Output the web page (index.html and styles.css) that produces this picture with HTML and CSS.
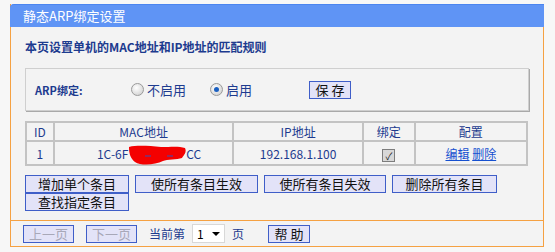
FILE: index.html
```html
<!DOCTYPE html>
<html lang="zh-CN">
<head>
    <meta charset="UTF-8">
    <title>静态ARP绑定设置</title>
    <link rel="stylesheet" href="styles.css">
</head>
<body>

<div class="panel">
    <!-- Title bar -->
    <div class="panel-title">静态ARP绑定设置</div>

    <div class="panel-body">
        <p class="intro">本页设置单机的MAC地址和IP地址的匹配规则</p>

        <!-- ARP binding switch -->
        <div class="switch-box">
            <span class="switch-label">ARP绑定:</span>
            <label class="radio-item w1"><span class="radio"></span>不启用</label>
            <label class="radio-item w2"><span class="radio checked"></span>启用</label>
            <button class="btn btn-save">保 存</button>
        </div>

        <!-- Binding list -->
        <table class="list">
            <tr class="head">
                <td class="c-id">ID</td>
                <td class="c-mac">MAC地址</td>
                <td class="c-ip">IP地址</td>
                <td class="c-bind">绑定</td>
                <td class="c-cfg">配置</td>
            </tr>
            <tr class="row">
                <td>1</td>
                <td><span class="mac">1C-6F<span class="redact"><svg width="60" height="22" viewBox="0 0 60 22"><path d="M2 3 C10 1 22 2 34 3 C44 3 52 2 58 4 C60 8 57 11 55 14 C50 16 40 15 36 17 C28 21 14 22 8 18 C3 14 2 9 2 3 Z" fill="#f40000"/><path d="M18 12 L24 12 M40 12 L46 12" stroke="#3050c0" stroke-width="1"/></svg></span>CC</span></td>
                <td>192.168.1.100</td>
                <td><span class="check">✓</span></td>
                <td><a href="#">编辑</a> <a href="#">删除</a></td>
            </tr>
        </table>

        <!-- Actions -->
        <div class="actions-wrap">
            <div class="actions">
                <button class="btn a1">增加单个条目</button>
                <button class="btn a2">使所有条目生效</button>
                <button class="btn a3">使所有条目失效</button>
                <button class="btn a4">删除所有条目</button>
            </div>
            <div class="actions">
                <button class="btn a1">查找指定条目</button>
            </div>
        </div>
    </div>

    <!-- Paging -->
    <div class="panel-foot">
        <button class="btn btn-page" disabled>上一页</button>
        <button class="btn btn-page" disabled>下一页</button>
        <span class="page-text">当前第</span>
        <span class="select">1<span class="arrow"></span></span>
        <span class="page-text">页</span>
        <button class="btn btn-help">帮 助</button>
    </div>
</div>

</body>
</html>
```
FILE: styles.css
```css
body {
    margin: 0;
    padding: 4px 0 0 10px;
    background-color: #f7f7f7;
    font-family: "Noto Sans CJK SC", sans-serif;
    font-size: 12px;
}
.panel {
    width: 532px;
    background-color: #f3f3f3;
    border: 1px solid #f5a142;
    border-top: none;
}
.panel-title {
    height: 22px;
    line-height: 22px;
    margin: 0 -1px;
    padding-left: 13px;
    background-color: #5f94f5;
    border-top: 1px solid #4b85f0;
    border-top-left-radius: 4px;
    color: white;
    font-size: 13px;
}
.panel-body {
    padding: 0 14px 9px 14px;
}
.intro {
    margin: 10px 0 0 0;
    height: 20px;
    line-height: 20px;
    color: #1d3b8f;
    font-weight: bold;
    font-size: 12px;
}
.switch-box {
    margin-top: 11px;
    height: 41px;
    display: flex;
    align-items: center;
    padding-left: 9px;
    border: 1px solid #cfcfcf;
    box-shadow: 1px 1px 0 #a9a9a9;
    color: #1d3b8f;
}
.switch-label {
    width: 96px;
    font-weight: bold;
    font-size: 11px;
}
.radio-item {
    display: flex;
    align-items: center;
    gap: 3px;
    font-size: 13px;
}
.w1 { width: 79px; }
.w2 { width: 99px; }
.radio {
    width: 11px;
    height: 11px;
    border-radius: 50%;
    border: 1px solid #9a9a9a;
    background: radial-gradient(circle at 40% 35%, #ffffff, #c9c9c9);
    position: relative;
}
.radio.checked::after {
    content: "";
    position: absolute;
    left: 3px;
    top: 3px;
    width: 5px;
    height: 5px;
    border-radius: 50%;
    background-color: #1a5fc0;
}
.btn {
    font-family: "Noto Sans CJK SC", sans-serif;
    font-size: 13px;
    height: 18px;
    line-height: 14px;
    padding: 0;
    background-color: #e3e3f8;
    border: 1px solid #3f5ec8;
    color: #111;
}
.btn-save {
    width: 42px;
}
.list {
    margin-top: 10px;
    width: 503px;
    border-collapse: collapse;
    border: 2px solid #c3c3c3;
    color: #1d3b8f;
    text-align: center;
}
.list td {
    border: 2px solid #c3c3c3;
    padding: 0;
}
.list .head td {
    height: 17px;
    font-size: 12px;
}
.list .row td {
    height: 19px;
}
.c-id { width: 26px; }
.c-mac { width: 178px; }
.c-ip { width: 128px; }
.c-bind { width: 50px; }
.c-cfg { width: 111px; }
.mac {
    display: inline-flex;
    align-items: center;
    margin-left: 11px;
}
.redact {
    display: inline-block;
    width: 58px;
    height: 20px;
    margin-top: 2px;
}
.redact svg {
    display: block;
    margin-left: -1px;
}
.check {
    display: inline-block;
    width: 11px;
    height: 11px;
    line-height: 11px;
    border: 1px solid #7d7d7d;
    background-color: #d8d8d8;
    color: #222;
    font-size: 10px;
    vertical-align: middle;
}
.list a {
    color: #1550d0;
    text-decoration: underline;
}
.actions-wrap {
    margin-top: 9px;
}
.actions {
    display: flex;
    gap: 6px;
}
.a1 { width: 104px; }
.a2 { width: 123px; }
.a3 { width: 122px; }
.a4 { width: 105px; }
.panel-foot {
    border-top: 1px solid #f5a142;
    height: 25px;
    display: flex;
    align-items: center;
    padding-left: 12px;
    color: #1d3b8f;
}
.btn-page {
    width: 51px;
    margin-right: 12px;
    color: #a8a8b8;
}
.page-text {
    font-size: 12px;
}
.select {
    display: inline-flex;
    align-items: center;
    justify-content: space-between;
    width: 23px;
    height: 17px;
    margin: 0 7px;
    padding: 0 4px;
    background-color: white;
    border: 1px solid #d8d8d8;
    color: #000;
}
.arrow {
    border-left: 4px solid transparent;
    border-right: 4px solid transparent;
    border-top: 4px solid #000;
}
.btn-help {
    width: 42px;
    margin-left: 24px;
}
```
